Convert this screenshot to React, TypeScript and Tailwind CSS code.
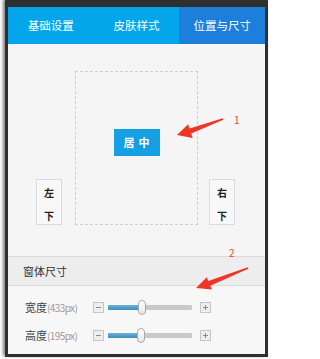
import React from "react";

const tabs = [
  { label: "基础设置", active: false },
  { label: "皮肤样式", active: false },
  { label: "位置与尺寸", active: true },
];

const sizes = [
  { name: "宽度", value: "433px", pos: 34 },
  { name: "高度", value: "195px", pos: 33 },
];

const SideBox = ({ top }: { top: string }) => (
  <div className="flex h-[46px] w-[26px] flex-col items-center border border-[#dcdcdc] bg-[#f8f8f8] pt-[6px] gap-[9px] text-[10px] font-bold leading-[14px] text-[#222]">
    <span>{top}</span>
    <span>下</span>
  </div>
);

const StepButton = ({ plus }: { plus?: boolean }) => (
  <div className="relative h-[11px] w-[11px] border border-[#c6c6c6] bg-[#eeeeee]">
    <span className="absolute left-[2px] top-[4px] h-px w-[5px] bg-[#8c8c8c]" />
    {plus && <span className="absolute left-[4px] top-[2px] h-[5px] w-px bg-[#8c8c8c]" />}
  </div>
);

export default function App() {
  return (
    <div
      className="relative h-[359px] w-[273px] bg-white"
      style={{ fontFamily: '"Noto Sans CJK SC", "Liberation Sans", sans-serif' }}
    >
      <div className="ml-[5px] flex h-[357px] w-[263px] flex-col border-[3px] border-t-[7px] border-[#2f2f2f] bg-[#f6f5f5] shadow-[-2px_-1px_3px_rgba(0,0,0,0.5)]">
        {/* tabs */}
        <div className="flex h-[37px]">
          {tabs.map((t) => (
            <div
              key={t.label}
              className={`flex flex-1 items-center justify-center text-[11.5px] text-white ${
                t.active ? "bg-[#1b7fdb]" : "bg-[#03a6ea]"
              }`}
            >
              {t.label}
            </div>
          ))}
        </div>

        {/* position area */}
        <div className="h-[212px] pt-[27px] pl-[28px]">
          <div className="flex items-end">
            <SideBox top="左" />
            <div className="ml-[13px] flex h-[154px] w-[123px] justify-center border border-dashed border-[#cfcfcf] pt-[57px]">
              <div className="flex h-[27px] w-[46px] items-center justify-center bg-[#14a0e3] pl-[4px] text-[11px] font-bold tracking-[4px] text-white">
                居中
              </div>
            </div>
            <div className="ml-[11px]">
              <SideBox top="右" />
            </div>
          </div>
        </div>

        {/* size section */}
        <div className="flex h-[30px] items-center border-y border-[#dadada] bg-[#eeeded] pl-[15px] text-[11px] text-[#333]">
          窗体尺寸
        </div>
        <div className="flex flex-1 flex-col bg-[#f8f7f7] pt-[7px] pl-[17px]">
          {sizes.map((s) => (
            <div key={s.name} className="flex h-[28px] items-center text-[11px]">
              <span className="w-[68px] text-[#444]">
                {s.name}
                <span className="text-[10px] tracking-[-0.6px] text-[#9a9a9a]">({s.value})</span>
              </span>
              <StepButton />
              <div className="relative ml-[4px] h-[5px] w-[84px] rounded-[1px] bg-[#c9c9c9]">
                <div
                  className="h-full rounded-[1px] bg-gradient-to-b from-[#6bb3d6] to-[#3a8dbb]"
                  style={{ width: `${s.pos}px` }}
                />
                <div
                  className="absolute top-[-5px] h-[15px] w-[8px] rounded-[4px] border border-[#a9a9a9] bg-gradient-to-b from-white to-[#e6e6e6]"
                  style={{ left: `${s.pos - 4}px` }}
                />
              </div>
              <div className="ml-[8px]">
                <StepButton plus />
              </div>
            </div>
          ))}
        </div>
      </div>

      {/* annotations */}
      <svg className="pointer-events-none absolute left-0 top-0" width="273" height="359">
        <polygon
          fill="#f03526"
          points="222.7,118.2 189.5,128.4 188.1,124.3 177,135 192.7,137.9 191.2,133.6 223.3,119.8"
        />
        <polygon
          fill="#f03526"
          points="247.7,267.3 208.3,281.1 206.8,277.2 196,288 211.9,289.5 210.3,285.7 248.3,268.7"
        />
      </svg>
      <span className="absolute left-[234px] top-[115px] text-[10px] leading-none text-[#e8453a]">1</span>
      <span className="absolute left-[229px] top-[248px] text-[10px] leading-none text-[#e8453a]">2</span>
    </div>
  );
}
